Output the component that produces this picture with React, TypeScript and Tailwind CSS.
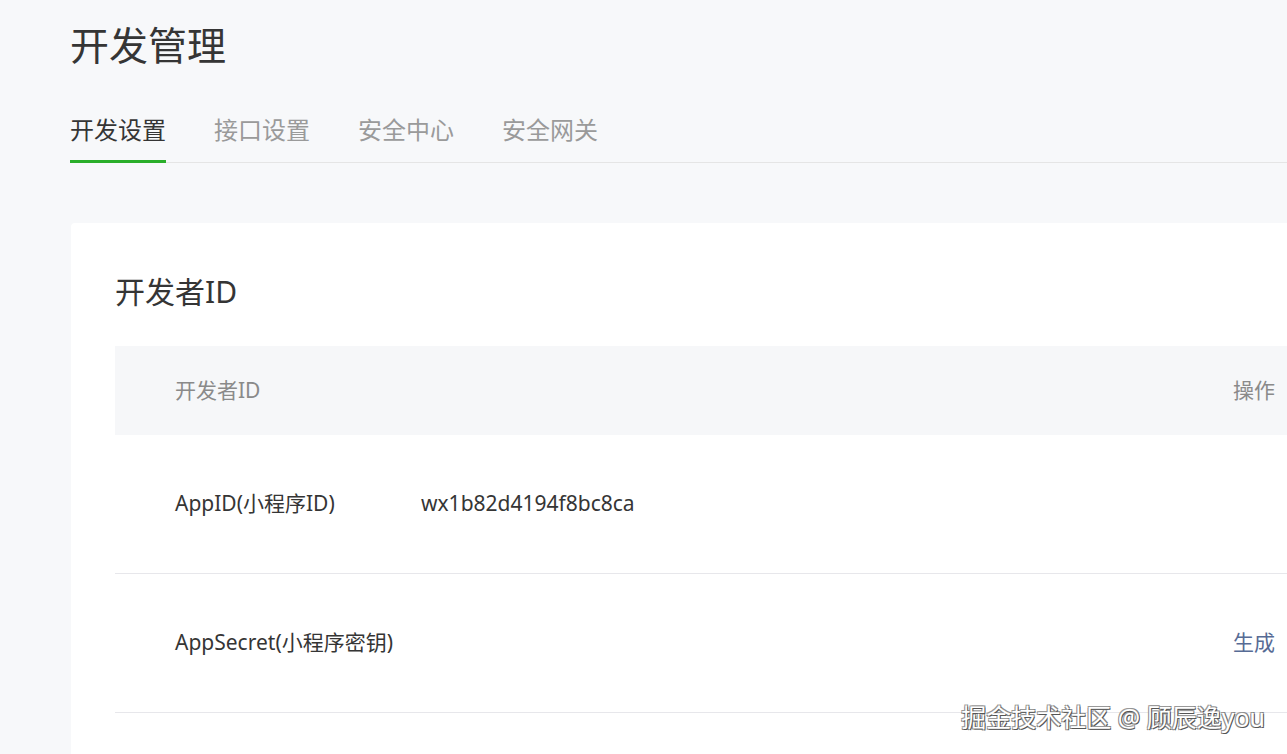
import React from 'react';

const tabs = ['开发设置', '接口设置', '安全中心', '安全网关'];

const App: React.FC = () => {
  return (
    <div
      className="relative h-[754px] w-[1287px] overflow-hidden bg-[#f7f8fa] text-[#353535]"
      style={{ fontFamily: '"Noto Sans", "Noto Sans CJK SC", sans-serif' }}
    >
      <div className="pl-[70px]">
        <h1 className="mt-[17px] text-[39px] leading-[56px] font-normal">开发管理</h1>

        <div className="mt-[41px] flex gap-[48px] border-b border-[#e5e5e5]">
          {tabs.map((t, i) => (
            <div
              key={t}
              className={
                i === 0
                  ? 'w-[96px] -mb-px border-b-[3px] border-[#2aae2a] pb-[14px] text-[24px] leading-[32px] text-[#353535]'
                  : 'w-[96px] pb-[14px] text-[24px] leading-[32px] text-[#9a9a9a]'
              }
            >
              {t}
            </div>
          ))}
        </div>

        <div className="ml-px mt-[60px] rounded-tl-[4px] bg-white pl-[44px] pt-[48px]">
          <h2 className="text-[30px] leading-[42px] font-normal">开发者ID</h2>

          <div className="mt-[33px]">
            <div className="flex h-[89px] items-center justify-between bg-[#f6f7f9] pl-[60px] pr-[12px] text-[21px] text-[#8a8a8a]">
              <span>开发者ID</span>
              <span>操作</span>
            </div>

            <div className="flex h-[139px] items-center border-b border-[#e7e7eb] pl-[60px] pr-[12px] text-[21px]">
              <span className="w-[246px]">AppID(小程序ID)</span>
              <span>wx1b82d4194f8bc8ca</span>
            </div>

            <div className="flex h-[139px] items-center justify-between border-b border-[#e7e7eb] pl-[60px] pr-[12px] text-[21px]">
              <span>AppSecret(小程序密钥)</span>
              <span className="text-[#576b95]">生成</span>
            </div>

            <div className="h-[60px]" />
          </div>
        </div>
      </div>

      <div className="absolute right-[22px] top-[700px] text-[25px] leading-[34px] text-white [text-shadow:1px_1px_0_#555,-1px_-1px_0_#999,1px_-1px_0_#888,-1px_1px_0_#888]">
        掘金技术社区 @ 顾辰逸you
      </div>
    </div>
  );
};

export default App;
